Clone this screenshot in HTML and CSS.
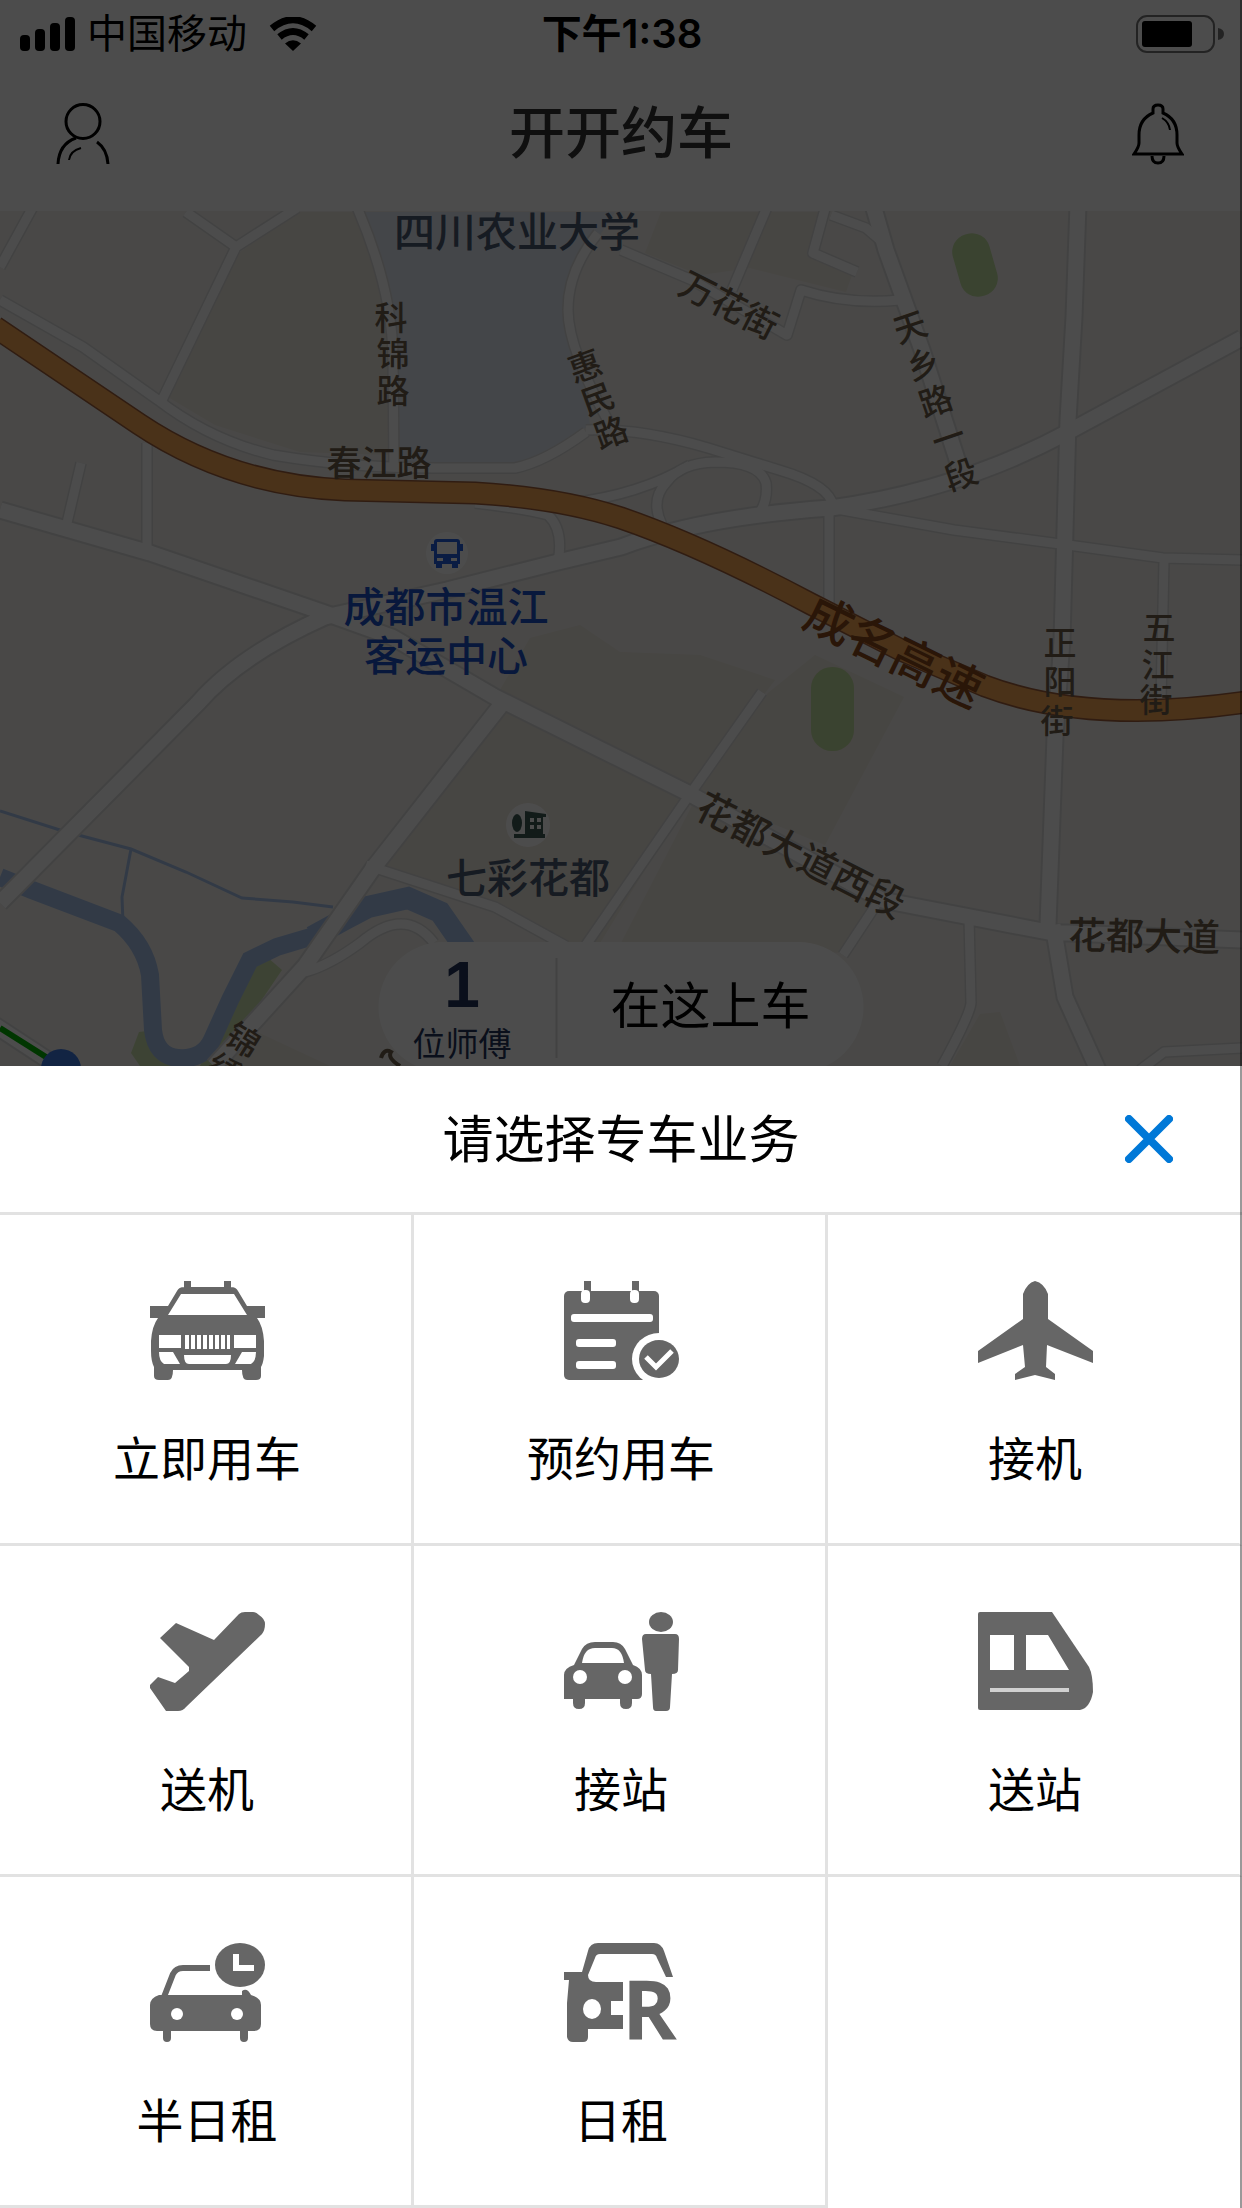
FILE: index.html
```
<!DOCTYPE html>
<html lang="zh-CN">
<head>
    <meta charset="UTF-8">
    <meta name="viewport" content="width=device-width, initial-scale=1">
    <title>开开约车</title>
    <link rel="stylesheet" href="styles.css">
</head>
<body>
<div class="screen">
    <div class="home">
        <div class="status-bar">
            <div class="status-left">
                <svg class="signal" viewBox="0 0 55 34" width="55" height="34">
                    <rect x="0" y="18" width="10" height="16" rx="4"/>
                    <rect x="15" y="12" width="10" height="22" rx="4"/>
                    <rect x="30" y="6" width="10" height="28" rx="4"/>
                    <rect x="45" y="0" width="10" height="34" rx="4"/>
                </svg>
                <span class="carrier">中国移动</span>
                <svg class="wifi" viewBox="0 0 48 34" width="48" height="34">
                    <path d="M3 11.500Q24 -6 45 11.500" fill="none" stroke="#000" stroke-width="7"/>
                    <path d="M10.500 20Q24 9 37.500 20" fill="none" stroke="#000" stroke-width="7"/>
                    <path d="M16 26.500Q24 20 32 26.500L24 34Z"/>
                </svg>
            </div>
            <span class="clock">下午1:38</span>
            <div class="status-right">
                <svg viewBox="0 0 88 38" width="88" height="38">
                    <rect x="1" y="1" width="77" height="36" rx="10" fill="none" stroke="#777" stroke-width="2"/>
                    <rect x="6" y="6" width="50" height="26" rx="3"/>
                    <path d="M82 13Q88 14 88 19Q88 24 82 25Z" fill="#777"/>
                </svg>
            </div>
        </div>

        <header class="nav">
            <button class="nav-btn" aria-label="个人中心">
                <svg viewBox="0 0 54 62" width="54" height="62" fill="none" stroke="#000" stroke-width="3">
                    <ellipse cx="27" cy="18.500" rx="17" ry="17"/>
                    <path d="M20 35Q3 41 2 61M41 39Q51 46 52 61"/>
                    <path d="M25 45Q14 48 13 57" stroke-width="2"/>
                </svg>
            </button>
            <h1 class="nav-title">开开约车</h1>
            <button class="nav-btn" aria-label="消息">
                <svg viewBox="0 0 52 62" width="52" height="62" fill="none" stroke="#000" stroke-width="3">
                    <path d="M21 10V6Q21 2 26 2Q31 2 31 6V10Q45 16 45 32V40Q45 44 50 51H2Q7 44 7 40V32Q7 16 21 10Z"/>
                    <path d="M20 53Q20 60 26 60Q32 60 32 53"/>
                    <path d="M30 15Q37 19 38 27" stroke-width="2"/>
                </svg>
            </button>
        </header>

        <div class="map">
            <svg class="map-canvas" viewBox="0 211 1242 855" preserveAspectRatio="xMidYMin slice">
                <!-- land use -->
                <path class="block" d="M236 255L297 212H358L386 300L392 455L300 452L215 425L168 397Z"/>
                <path class="block" d="M661 212H822L812 252L852 275L846 292L750 268L700 275L645 253Z"/>
                <path class="block" d="M500 690L530 638L580 625L620 652L700 655L775 680L688 793L621 758Z"/>
                <path class="block" d="M768 693L815 655L904 697L825 845L690 790Z"/>
                <path class="block" d="M505 712L688 800L600 943H566L495 905L378 865Z"/>
                <path class="block" d="M695 800L878 905L845 953L621 943Z"/>
                <path class="block" d="M253 1030L330 1066H220ZM950 1066L980 1014L1000 1012L1020 1066Z"/>
                <path class="campus" d="M362 212H615L600 235Q572 280 572 315L590 425L545 453L515 466H396V333Q390 270 362 212Z"/>
                <rect class="park" x="956" y="233" width="38" height="64" rx="18" transform="rotate(-16 975 265)"/>
                <rect class="park" x="811" y="667" width="43" height="84" rx="21"/>
                <path class="park light" d="M267 957L282 970L238 1035L214 1066H200L250 960ZM139 1032L155 1030L175 1066H140L131 1053Z"/>

                <!-- water -->
                <path class="river" d="M0 877L32 890L119 923Q145 945 150 975L153 1030Q156 1056 178 1058Q203 1060 212 1040L230 1000L250 960L277 947L317 935"/>
                <path class="river wide" d="M312 937L345 919L368 907L408 898L440 912L465 948"/>
                <path class="brook" d="M0 811L63 831L131 849L186 872L242 898L293 902L333 907M131 849L122 897L123 923"/>

                <!-- roads: casing first, fill on top -->
                <defs>
                    <g id="lanes">
                        <path d="M34 205L0 267M186 212L236 247L297 208M236 247L162 400"/>
                        <path d="M0 300L83 347L158 400Q210 440 273 455Q350 468 436 468H515Q545 462 586 432"/>
                        <path d="M586 430Q640 428 708 448L779 470Q830 485 833 506"/>
                        <path d="M356 205Q393 290 393 360L394 466"/>
                        <path d="M598 233Q568 270 568 310Q568 350 612 428"/>
                        <path d="M621 250L692 280L787 335L801 290Q847 305 900 300"/>
                        <path d="M768 205L732 290M826 205L813 253L857 272M831 215L866 228L880 240"/>
                        <path d="M570 503Q640 495 690 465M662 525Q650 500 666 483Q680 463 715 462Q760 462 766 483Q768 500 760 512"/>
                        <path d="M475 503Q520 508 548 515Q564 530 558 562"/>
                        <path d="M831 508L954 530L1068 545L1163 558L1242 560M1164 560L1161 700M829 510V620"/>
                        <path d="M81 463L67 523M147 443V550"/>
                        <path d="M366 865L495 907L566 946M762 692L688 797L586 945M876 905L843 955"/>
                        <path d="M969 918L971 1003Q970 1015 942 1066M1140 1070L1164 1052L1242 1048"/>
                        <path d="M305 972Q330 965 360 943Q405 905 434 943"/>
                    </g>
                    <g id="streets">
                        <path d="M873 205L886 250L922 350L962 475"/>
                        <path d="M1078 205L1074 317L1068 420L1062 640L1055 737L1048 925"/>
                        <path d="M1242 338L1068 432Q960 490 831 508Q700 517 621 547L558 562L447 590L325 617"/>
                        <path d="M0 510L150 553L325 613L392 637L495 697L688 793L882 900L1053 933H1068L1242 940"/>
                        <path d="M325 617Q240 655 198 703L0 903M501 705L374 867L305 966L214 1066"/>
                        <path d="M1053 925L1065 997L1098 1070M-10 1022L60 1068"/>
                    </g>
                </defs>
                <use href="#lanes" class="lane-edge"/>
                <use href="#streets" class="street-edge"/>
                <use href="#lanes" class="lane"/>
                <use href="#streets" class="street"/>

                <path class="highway-edge" d="M-5 327L47 362L139 424Q230 485 345 490L475 493Q560 498 621 518Q700 545 811 604L901 650L985 686Q1088 725 1247 702"/>
                <path class="highway" d="M-5 327L47 362L139 424Q230 485 345 490L475 493Q560 498 621 518Q700 545 811 604L901 650L985 686Q1088 725 1247 702"/>
                <path class="route" d="M0 1028L46 1057"/>
                <circle cx="61" cy="1069" r="20" fill="#3f78e0"/>

                <!-- markers -->
                <circle cx="447" cy="553" r="21" fill="#fff"/>
                <g fill="#245fe0">
                    <path fill-rule="evenodd" d="M437 539H457Q460 539 460 542V544H463V551H460V564H458V568H452V564H442V568H436V564H434V551H431V544H434V542Q434 539 437 539ZM437 542V554H457V542Z"/>
                    <path d="M437 558H443V561H437ZM451 558H457V561H451Z" fill="#fff"/>
                </g>
                <circle cx="528" cy="825" r="22" fill="#fff"/>
                <g fill="#3d5a55">
                    <ellipse cx="517" cy="823" rx="5" ry="9"/>
                    <path d="M514 834H545V838H514ZM525 811L546 814V817H543V838H525Z"/>
                    <path d="M530 818H534V822H530ZM537 818H541V822H537ZM530 825H534V829H530ZM537 825H541V829H537Z" fill="#fff"/>
                </g>

                <!-- names -->
                <g class="place">
                    <text x="517" y="247">四川农业大学</text>
                    <text x="528" y="893">七彩花都</text>
                </g>
                <g class="station">
                    <text x="446" y="622">成都市温江</text>
                    <text x="446" y="671">客运中心</text>
                </g>
                <g class="road-name">
                    <text><tspan x="391" y="330">科</tspan><tspan x="393" y="366">锦</tspan><tspan x="393" y="403">路</tspan></text>
                    <text transform="rotate(-20 598 399)"><tspan x="597" y="376">惠</tspan><tspan x="598" y="411">民</tspan><tspan x="599" y="447">路</tspan></text>
                    <text transform="rotate(-19 936 402)"><tspan x="936" y="335">天</tspan><tspan x="936" y="374">乡</tspan><tspan x="936" y="413">路</tspan><tspan x="936" y="452">一</tspan><tspan x="936" y="491">段</tspan></text>
                    <text><tspan x="1060" y="655">正</tspan><tspan x="1060" y="694">阳</tspan><tspan x="1057" y="733">街</tspan></text>
                    <text><tspan x="1159" y="640">五</tspan><tspan x="1158" y="677">江</tspan><tspan x="1156" y="712">街</tspan></text>
                    <text class="mid" x="379" y="476">春江路</text>
                    <text class="mid" x="729" y="318" transform="rotate(27 729 305)">万花街</text>
                    <text class="big" x="801" y="869" transform="rotate(27 801 855)">花都大道西段</text>
                    <text class="big" x="1144" y="950" transform="rotate(1 1144 936)">花都大道</text>
                    <text transform="rotate(32 243 1040)"><tspan x="243" y="1052">锦</tspan><tspan x="243" y="1088">绣</tspan></text>
                    <path d="M381 1058Q384 1048 391 1052Q387 1058 400 1066" fill="none" stroke="#6e604c" stroke-width="4"/>
                </g>
                <text class="highway-name" x="894" y="669" transform="rotate(26 894 652)">成名高速</text>
            </svg>

            <div class="pickup">
                <div class="drivers">
                    <strong class="drivers-count">1</strong>
                    <span class="drivers-unit">位师傅</span>
                </div>
                <button class="pickup-btn">在这上车</button>
            </div>
        </div>
    </div>

    <section class="sheet" role="dialog" aria-labelledby="sheet-title">
        <div class="sheet-head">
            <h2 class="sheet-title" id="sheet-title">请选择专车业务</h2>
            <button class="sheet-close" aria-label="关闭">
                <svg viewBox="0 0 48 48" width="48" height="48" fill="none" stroke="#0078d7" stroke-width="8" stroke-linecap="round">
                    <path d="M4 4L44 44M44 4L4 44"/>
                </svg>
            </button>
        </div>
        <div class="services">
            <button class="service">
                <svg class="service-icon" viewBox="0 0 115 100">
                    <path d="M34 0H41V8H34ZM74 0H81V8H74ZM0 25H18L27 10Q29 6 34 6H81Q86 6 88 10L97 25H115V37H107Q113 45 114 60V75Q113 83 111 86V95Q111 99 106 99H97Q92 99 92 89H23Q23 99 18 99H9Q4 99 4 95V86Q1 80 1 70V60Q2 45 8 37H0Z"/>
                    <g fill="#fff">
                        <path d="M31 13H84L97 34H18ZM9 54H31V67H9ZM84 54H106V67H84Z"/>
                        <path d="M9 71H23L30 83H14Q9 80 9 71ZM106 71H92L85 83H101Q106 80 106 71ZM34 74H81Q81 83 76 83H39Q34 83 34 74Z"/>
                        <path d="M35 54h4v14h-4zM41 54h4v14h-4zM47 54h4v14h-4zM53 54h4v14h-4zM59 54h4v14h-4zM65 54h4v14h-4zM71 54h4v14h-4zM77 54h3v14h-3z"/>
                    </g>
                </svg>
                <span class="service-name">立即用车</span>
            </button>
            <button class="service">
                <svg class="service-icon" viewBox="0 0 115 100">
                    <rect x="0" y="10" width="95" height="89" rx="5"/>
                    <path d="M20 0H27V10H20ZM68 0H75V10H68Z"/>
                    <g fill="#fff">
                        <rect x="17" y="9" width="9" height="13" rx="4"/>
                        <rect x="66" y="9" width="9" height="13" rx="4"/>
                        <rect x="7" y="33" width="82" height="8" rx="3"/>
                        <rect x="12" y="58" width="40" height="8" rx="3"/>
                        <rect x="12" y="80" width="40" height="8" rx="3"/>
                        <ellipse cx="95" cy="78" rx="27" ry="26"/>
                    </g>
                    <ellipse cx="95" cy="78" rx="20" ry="19"/>
                    <path d="M82 76L92 86L108 70" fill="none" stroke="#fff" stroke-width="5"/>
                </svg>
                <span class="service-name">预约用车</span>
            </button>
            <button class="service">
                <svg class="service-icon" viewBox="0 0 115 100">
                    <path d="M57 0Q66 2 70 13V38L115 70V82L69 64L68 86L77 93V99L57 94L37 99V93L47 86L45 64L0 82V70L45 38V13Q49 2 57 0Z"/>
                </svg>
                <span class="service-name">接机</span>
            </button>
            <button class="service">
                <svg class="service-icon" viewBox="0 0 115 100">
                    <path d="M89 2Q91 0 95 0H103Q106 0 109 3Q115 7 115 12Q115 18 112 22L36 95Q33 99 28 99H16L0 76V73L8 65L25 71L39 59V55L10 26L26 11L64 28Z"/>
                </svg>
                <span class="service-name">送机</span>
            </button>
            <button class="service">
                <svg class="service-icon" viewBox="0 0 115 100">
                    <ellipse cx="97" cy="10" rx="12" ry="10"/>
                    <path d="M82 22H111Q115 22 115 27L114 58Q114 62 108 62L106 95Q106 99 102 99H92Q89 99 89 95L87 62Q81 62 81 58L78 27Q78 22 82 22Z"/>
                    <path d="M10 53L18 37Q22 30 31 30H49Q57 30 61 37L69 53Q78 56 78 63V82Q78 87 73 87H68V91Q68 97 62 97Q56 97 56 91V87H21V91Q21 97 15 97Q9 97 9 91V87H0V63Q0 56 10 53Z"/>
                    <g fill="#fff">
                        <path d="M18 51Q20 36 31 36H48Q58 36 60 51Z"/>
                        <circle cx="16" cy="65" r="7"/>
                        <circle cx="61" cy="65" r="7"/>
                    </g>
                </svg>
                <span class="service-name">接站</span>
            </button>
            <button class="service">
                <svg class="service-icon" viewBox="0 0 115 100">
                    <path d="M2 0H74L111 55Q115 63 115 80Q112 96 102 98H2Q0 98 0 96V2Q0 0 2 0Z"/>
                    <path d="M12 23H36V58H12ZM48 23H70L91 58H48Z" fill="#fff"/>
                    <path d="M12 76H91V80H12Z" fill="#d0d0d0"/>
                </svg>
                <span class="service-name">送站</span>
            </button>
            <button class="service">
                <svg class="service-icon" viewBox="0 0 115 100">
                    <path d="M14 54L23 31Q26 25 33 25H60" fill="none" stroke="#666" stroke-width="6"/>
                    <path d="M9 52H92V48Q97 44 101 52Q111 55 111 62V81Q111 88 104 88H98V95Q98 99 94 99Q90 99 90 95V88H21V95Q21 99 17 99Q13 99 13 95V88H7Q0 88 0 81V62Q0 55 9 52Z"/>
                    <ellipse cx="90" cy="22" rx="25" ry="22"/>
                    <path d="M86 11V25H104" fill="none" stroke="#fff" stroke-width="6"/>
                    <circle cx="27" cy="71" r="6" fill="#fff"/>
                    <circle cx="87" cy="71" r="6" fill="#fff"/>
                </svg>
                <span class="service-name">半日租</span>
            </button>
            <button class="service">
                <svg class="service-icon" viewBox="0 0 115 100">
                    <path d="M0 29H18L24 8Q26 0 34 0H90Q97 0 100 8L109 34H102L93 15Q92 11 88 11H36Q32 11 31 15L24 32Q24 39 32 39H59V58H47V72H59V86H24V94Q24 99 19 99H9Q4 99 3 94V60L5 37H0Z"/>
                    <ellipse cx="28" cy="66" rx="9" ry="10" fill="#fff"/>
                    <text class="rent-mark" x="58" y="97">R</text>
                </svg>
                <span class="service-name">日租</span>
            </button>
        </div>
    </section>
</div>
</body>
</html>
```
FILE: styles.css
```
* {
    box-sizing: border-box;
}
body {
    margin: 0;
    background: #fff;
    color: #000;
    font-family: "Liberation Sans", "Noto Sans CJK SC", sans-serif;
}
button {
    margin: 0;
    padding: 0;
    border: 0;
    background: none;
    color: inherit;
    font: inherit;
    cursor: pointer;
}
svg {
    display: block;
}
.screen {
    position: relative;
    min-height: 100vh;
    display: flex;
    flex-direction: column;
}
.screen::after {
    content: "";
    position: absolute;
    top: 0;
    right: 0;
    bottom: 0;
    width: 2px;
    background: rgba(0, 0, 0, 0.4);
    pointer-events: none;
}

/* home page, dimmed behind the sheet */
.home {
    position: relative;
    flex: 1;
    display: flex;
    flex-direction: column;
    overflow: hidden;
}
.home::after {
    content: "";
    position: absolute;
    inset: 0;
    background: rgba(0, 0, 0, 0.7);
}
.status-bar {
    height: 68px;
    padding: 0 18px 0 20px;
    display: grid;
    grid-template-columns: 1fr auto 1fr;
    align-items: center;
    font-size: 40px;
    line-height: 68px;
}
.status-left {
    display: flex;
    align-items: center;
}
.carrier {
    margin: 0 22px 0 12px;
}
.clock {
    font-family: Inter, "Noto Sans CJK SC", sans-serif;
    font-weight: 600;
}
.status-right {
    display: flex;
    justify-content: flex-end;
}
.nav {
    height: 143px;
    padding: 0 58px 12px 56px;
    display: flex;
    align-items: center;
    justify-content: space-between;
}
.nav-title {
    margin: 0;
    color: #333;
    font-size: 56px;
    font-weight: 500;
    line-height: 80px;
}

/* map */
.map {
    position: relative;
    flex: 1 0 400px;
    min-height: 0;
    overflow: hidden;
    background: #f3f2ee;
}
.map-canvas {
    position: absolute;
    width: 100%;
    height: 100%;
}
.block {
    fill: #efe9df;
}
.campus {
    fill: #e4eaf3;
}
.park {
    fill: #c3e0a0;
}
.park.light {
    fill: #cde2ae;
}
.river {
    fill: none;
    stroke: #a8c2ec;
    stroke-width: 18;
}
.river.wide {
    stroke-width: 22;
}
.brook {
    fill: none;
    stroke: #a8c2ec;
    stroke-width: 3;
}
.lane-edge, .lane, .street-edge, .street, .highway-edge, .highway, .route {
    fill: none;
    stroke-linejoin: round;
}
.lane-edge {
    stroke: #dedede;
    stroke-width: 12;
}
.lane {
    stroke: #fff;
    stroke-width: 9;
}
.street-edge {
    stroke: #dedede;
    stroke-width: 19;
}
.street {
    stroke: #fff;
    stroke-width: 15;
}
.highway-edge {
    stroke: #a0603c;
    stroke-width: 23;
}
.highway {
    stroke: #f8a854;
    stroke-width: 20;
}
.route {
    stroke: #00b400;
    stroke-width: 6;
}
.map-canvas text {
    text-anchor: middle;
    font-weight: 500;
}
.place {
    fill: #4c5a74;
    font-size: 41px;
}
.station {
    fill: #1c50c8;
    font-size: 41px;
}
.road-name {
    fill: #6e604c;
    font-size: 33px;
}
.road-name .mid {
    font-size: 35px;
}
.road-name .big {
    font-size: 38px;
}
.highway-name {
    fill: #8c4a1c;
    font-size: 48px;
}

/* pick-up bar floating over the map */
.pickup {
    position: absolute;
    left: 50%;
    bottom: -6px;
    width: 485px;
    height: 130px;
    transform: translateX(-50%);
    display: flex;
    border-radius: 65px;
    background: #fff;
}
.drivers {
    width: 179px;
    height: 100px;
    margin-top: 16px;
    padding-right: 10px;
    border-right: 2px solid #ddd;
    display: flex;
    flex-direction: column;
    align-items: center;
    color: #24345a;
}
.drivers-count {
    font-size: 64px;
    line-height: 54px;
}
.drivers-unit {
    font-size: 33px;
    line-height: 66px;
}
.pickup-btn {
    flex: 1;
    padding-bottom: 10px;
    font-size: 50px;
}

/* service picker */
.sheet {
    background: #fff;
}
.sheet-head {
    height: 149px;
    padding: 0 69px;
    border-bottom: 3px solid #e2e2e2;
    display: grid;
    grid-template-columns: 1fr auto 1fr;
    align-items: center;
}
.sheet-title {
    grid-column: 2;
    margin: 0;
    padding-top: 4px;
    font-size: 51px;
    font-weight: 400;
    line-height: 72px;
}
.sheet-close {
    justify-self: end;
}
.services {
    display: grid;
    grid-template-columns: repeat(3, 1fr);
}
.service {
    height: 331px;
    padding: 66px 0 0 3px;
    border-right: 3px solid #e2e2e2;
    border-bottom: 3px solid #e2e2e2;
    display: flex;
    flex-direction: column;
    align-items: center;
}
.service:nth-child(3n) {
    border-right-color: transparent;
}
.service-icon {
    width: 115px;
    height: 100px;
    overflow: visible;
    fill: #666;
}
.service-name {
    margin-top: 46px;
    font-size: 47px;
    line-height: 66px;
}
.rent-mark {
    font: 700 83px "Open Sans", sans-serif;
}
```
